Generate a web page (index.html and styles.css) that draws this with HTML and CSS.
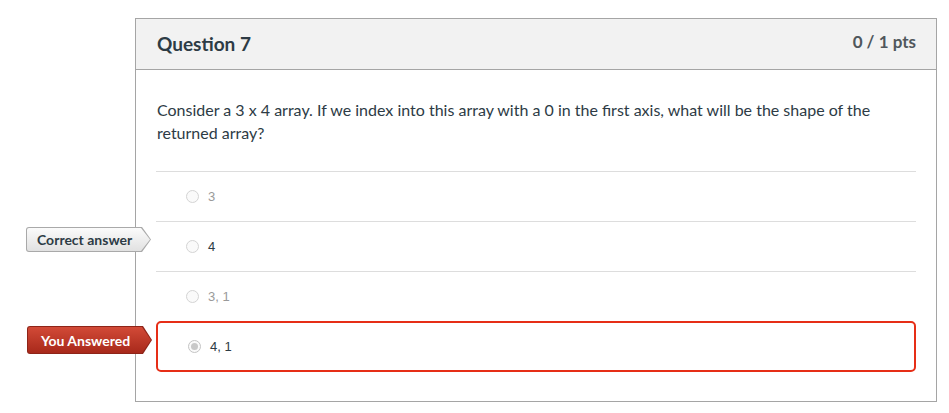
FILE: index.html
```html
<!DOCTYPE html>
<html>
<head>
<meta charset="utf-8">
<link rel="stylesheet" href="styles.css">
</head>
<body>
<div class="card">
  <div class="card-header">
    <h2 class="q-title">Question 7</h2>
    <span class="q-points">0 / 1 pts</span>
  </div>
  <div class="card-body">
    <p class="q-text">Consider a 3 x 4 array. If we index into this array with a 0 in the first axis, what will be the shape of the returned array?</p>
    <div class="answers">
      <div class="answer">
        <span class="radio"></span><span class="a-text muted">3</span>
      </div>
      <div class="answer">
        <div class="tag tag-correct"><span class="tag-inner">Correct answer</span></div>
        <span class="radio"></span><span class="a-text">4</span>
      </div>
      <div class="answer">
        <span class="radio"></span><span class="a-text muted">3, 1</span>
      </div>
      <div class="answer answer-selected">
        <div class="tag tag-wrong"><span class="tag-inner">You Answered</span></div>
        <span class="radio radio-checked"></span><span class="a-text">4, 1</span>
      </div>
    </div>
  </div>
</div>
</body>
</html>
```
FILE: styles.css
```css
html, body {
  margin: 0;
  padding: 0;
  background: #ffffff;
}
body {
  font-family: Lato, "Liberation Sans", Arial, sans-serif;
  color: #2d3b45;
  padding-top: 18px;
}
.card {
  margin-left: 135px;
  width: 800px;
  border: 1px solid #a5a5a5;
  box-sizing: content-box;
}
.card-header {
  height: 50px;
  background: #f2f2f2;
  border-bottom: 1px solid #a5a5a5;
  display: flex;
  align-items: flex-start;
  justify-content: space-between;
  padding: 0 20px 0 21px;
}
.q-title {
  margin: 0;
  padding-top: 13px;
  font-size: 19px;
  font-weight: 700;
  line-height: 24px;
  color: #2d3b45;
}
.q-points {
  padding-top: 12px;
  font-size: 17px;
  font-weight: 700;
  line-height: 22px;
  color: #50575c;
}
.card-body {
  padding: 28px 20px 29px 20px;
}
.q-text {
  margin: 0 0 27px 1px;
  font-size: 16px;
  line-height: 23px;
  color: #2d3b45;
}
.answers {
  display: flex;
  flex-direction: column;
}
.answer {
  position: relative;
  height: 49px;
  border-top: 1px solid #dddddd;
  display: flex;
  align-items: center;
  padding-left: 30px;
  font-family: "Liberation Sans", Arial, sans-serif;
  font-size: 13px;
}
.answer-selected {
  height: 47px;
  border: 2px solid #e62e17;
  border-radius: 5px;
  padding-left: 30px;
}
.radio {
  width: 11px;
  height: 11px;
  border: 1px solid #d4d4d4;
  border-radius: 50%;
  background: #fafafa;
  margin-right: 9px;
  position: relative;
}
.radio-checked {
  border-color: #c4c4c4;
}
.radio-checked::after {
  content: "";
  position: absolute;
  left: 2px;
  top: 2px;
  width: 7px;
  height: 7px;
  border-radius: 50%;
  background: #c8c8c8;
}
.a-text {
  color: #2d3b45;
  line-height: 16px;
}
.a-text.muted {
  color: #9a9a9a;
}
.tag {
  position: absolute;
  right: 100%;
  width: 125px;
  padding: 1px;
  box-sizing: border-box;
  border-radius: 3px;
  clip-path: polygon(0 0, calc(100% - 9px) 0, 100% 50%, calc(100% - 9px) 100%, 0 100%);
  font-family: Lato, "Liberation Sans", Arial, sans-serif;
  font-weight: 700;
  font-size: 14px;
}
.tag-inner {
  display: flex;
  align-items: center;
  height: 100%;
  border-radius: 2px;
  clip-path: polygon(0 0, calc(100% - 9px) 0, 100% 50%, calc(100% - 9px) 100%, 0 100%);
}
.tag-correct {
  top: 5px;
  height: 25px;
  margin-right: 5px;
  background: #a9a9a9;
}
.tag-correct .tag-inner {
  background: linear-gradient(#fbfbfb, #e1e1e1);
  color: #2d3b45;
  padding-left: 10px;
}
.tag-wrong {
  top: 3px;
  height: 28px;
  margin-right: 6px;
  background: #8e2418;
}
.tag-wrong .tag-inner {
  background: linear-gradient(#d24a37, #a8291b);
  color: #ffffff;
  padding-left: 13px;
}
```
